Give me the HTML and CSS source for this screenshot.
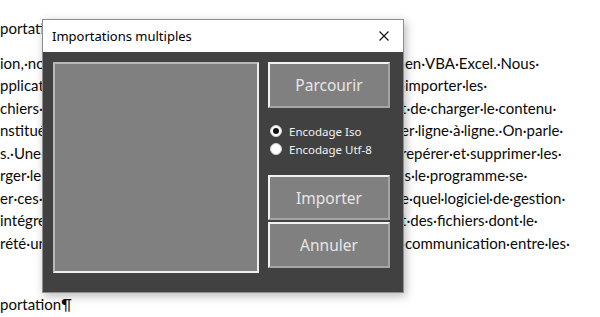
FILE: index.html
```
<!DOCTYPE html>
<html lang="fr">
<head>
	<meta charset="UTF-8">
	<title>Importations multiples</title>
	<link rel="stylesheet" href="styles.css">
</head>
<body>
	<div class="page">
		<div class="doc">
			<div class="line head"><span class="lt">portation·de·fichiers</span><span class="rt"></span></div>
			<div class="para">
				<div class="line"><span class="lt">ion,·nous</span><span class="rt">·en·VBA·Excel.·Nous·</span></div>
				<div class="line"><span class="lt">pplication</span><span class="rt">·importer·les·</span></div>
				<div class="line"><span class="lt">chiers·de</span><span class="rt">t·de·charger·le·contenu·</span></div>
				<div class="line"><span class="lt">nstitué</span><span class="rt">er·ligne·à·ligne.·On·parle·</span></div>
				<div class="line"><span class="lt">s.·Une·fois</span><span class="rt">repérer·et·supprimer·les·</span></div>
				<div class="line"><span class="lt">rger·le·co</span><span class="rt">is·le·programme·se·</span></div>
				<div class="line"><span class="lt">er·ces·do</span><span class="rt">e·quel·logiciel·de·gestion·</span></div>
				<div class="line"><span class="lt">intégrer</span><span class="rt">t·des·fichiers·dont·le·</span></div>
				<div class="line"><span class="lt">rété·une</span><span class="rt">·communication·entre·les·</span></div>
			</div>
			<div class="line head last"><span class="lt">portation¶</span><span class="rt"></span></div>
		</div>

		<div class="dialog">
			<div class="titlebar">
				<span class="title">Importations multiples</span>
				<svg class="close" width="10" height="10" viewBox="0 0 10 10">
					<path d="M0.5 0.5L9.5 9.5M9.5 0.5L0.5 9.5" stroke="#111" stroke-width="1.1" fill="none"/>
				</svg>
			</div>
			<div class="form">
				<div class="listbox"></div>
				<div class="controls">
					<div class="btn">Parcourir</div>
					<div class="options">
						<div class="opt"><span class="radio on"></span>Encodage Iso</div>
						<div class="opt"><span class="radio"></span>Encodage Utf-8</div>
					</div>
					<div class="btn import">Importer</div>
					<div class="btn cancel">Annuler</div>
				</div>
			</div>
		</div>
	</div>
</body>
</html>
```

FILE: styles.css
```
html,body{
	margin: 0;
	padding: 0;
	background: #fff;
}
.page{
	position: relative;
	width: 600px;
	height: 317px;
	overflow: hidden;
	background: #fff;
}

/* document behind the form */
.doc{
	padding-top: 17px;
	font-family: Lato, "Liberation Sans", sans-serif;
	font-size: 15px;
	color: #0a0a0a;
}
.line{
	display: grid;
	grid-template-columns: 60px 1fr;
	column-gap: 341px;
	height: 22.5px;
	line-height: 22.5px;
	white-space: nowrap;
}
.para{margin-top: 12px;}
.head.last{margin-top: 39px;}

/* userform */
.dialog{
	position: absolute;
	left: 42px;
	top: 19px;
	width: 362px;
	height: 274px;
	box-sizing: border-box;
	border: 1px solid #8e8e8e;
	background: #414141;
	box-shadow: 2px 3px 9px rgba(0,0,0,.28);
	display: flex;
	flex-direction: column;
}
.titlebar{
	height: 32px;
	flex: none;
	background: #fff;
	display: flex;
	align-items: center;
	justify-content: space-between;
	padding: 0 14px 0 9px;
	font-family: "Noto Sans", sans-serif;
	font-size: 13px;
	color: #000;
}
.close{display: block;}
.form{
	flex: 1;
	display: flex;
	gap: 9px;
	padding: 10px 0 0 10px;
}
.listbox{
	width: 206px;
	height: 211px;
	box-sizing: border-box;
	background: #808080;
	border: 2px solid;
	border-color: #b8b8b8 #eeeeee #eeeeee #b8b8b8;
}
.controls{
	width: 122px;
	display: flex;
	flex-direction: column;
}
.btn{
	height: 46px;
	box-sizing: border-box;
	background: #808080;
	border: 2px solid;
	border-color: #f2f2f2 #a4a4a4 #a4a4a4 #f2f2f2;
	color: #e6e6e6;
	font-family: "Noto Sans", sans-serif;
	font-size: 15.5px;
	display: flex;
	align-items: center;
	justify-content: center;
}
.btn.import{margin-top: 17px; height: 45px;}
.btn.cancel{margin-top: 2px;}
.options{
	margin-top: 14px;
	display: flex;
	flex-direction: column;
}
.opt{
	height: 18px;
	display: flex;
	align-items: center;
	gap: 7px;
	padding-left: 2px;
	font-family: "Noto Sans", sans-serif;
	font-size: 11.5px;
	color: #f2f2f2;
}
.radio{
	width: 12px;
	height: 12px;
	box-sizing: border-box;
	border-radius: 50%;
	background: #fff;
	border: 1px solid #d0d0d0;
	display: flex;
	align-items: center;
	justify-content: center;
}
.radio.on::after{
	content: "";
	width: 6px;
	height: 6px;
	border-radius: 50%;
	background: #111;
}
```
